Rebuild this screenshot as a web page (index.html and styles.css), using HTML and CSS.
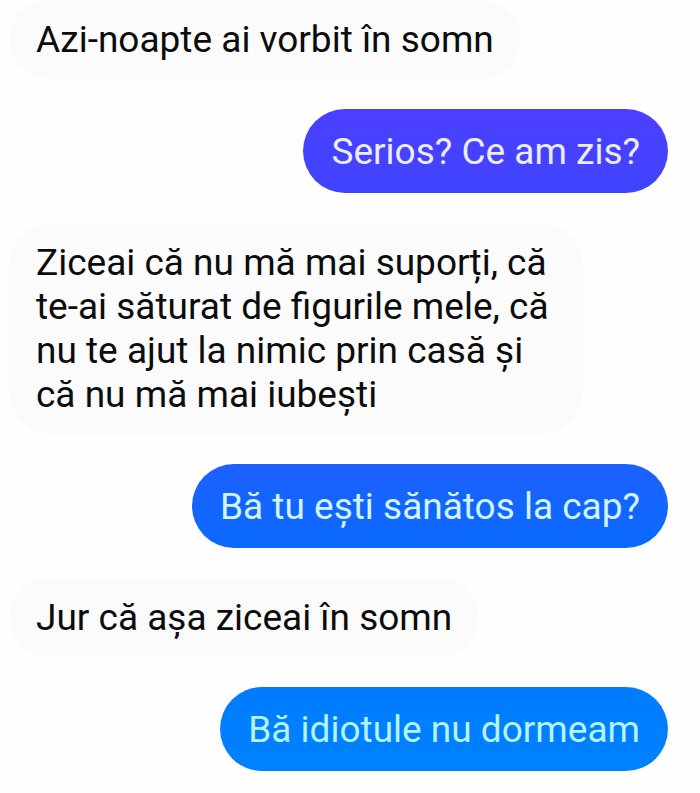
FILE: index.html
```html
<!DOCTYPE html>
<html lang="ro">
<head>
    <meta charset="UTF-8">
    <meta name="viewport" content="width=device-width, initial-scale=1.0">
    <title>Chat</title>
    <link rel="stylesheet" href="styles.css">
</head>
<body>
    <main class="chat">
        <p class="message received">Azi-noapte ai vorbit în somn</p>
        <p class="message sent violet">Serios? Ce am zis?</p>
        <p class="message received">Ziceai că nu mă mai suporți, că te-ai săturat de figurile mele, că nu te ajut la nimic prin casă și că nu mă mai iubești</p>
        <p class="message sent blue">Bă tu ești sănătos la cap?</p>
        <p class="message received">Jur că așa ziceai în somn</p>
        <p class="message sent azure">Bă idiotule nu dormeam</p>
    </main>
</body>
</html>
```

FILE: styles.css
```css
* {
    box-sizing: border-box;
}
body {
    margin: 0;
    background-color: #fefefe;
    font-family: Roboto, "Liberation Sans", sans-serif;
}
.chat {
    display: flex;
    flex-direction: column;
    align-items: flex-start;
    gap: 30px;
    padding: 0 32px 22px 9px;
}
.message {
    max-width: 574px;
    margin: 0;
    border-radius: 42px;
    font-size: 37px;
    line-height: 44px;
}
.received {
    padding: 18px 27px 17px;
    background-color: #fbfbfb;
    color: #0c0c0c;
}
.sent {
    align-self: flex-end;
    padding: 21px 28px 19px;
}
/* Sent bubbles go from violet to light blue down the chat */
.violet {
    background: linear-gradient(#4b3fff, #4044ff);
    color: #ebedff;
}
.blue {
    background: linear-gradient(#1d60ff, #0a6aff);
    color: #d0f5ff;
}
.azure {
    background: linear-gradient(#007cff, #0082ff);
    color: #b4f4ff;
}
```
